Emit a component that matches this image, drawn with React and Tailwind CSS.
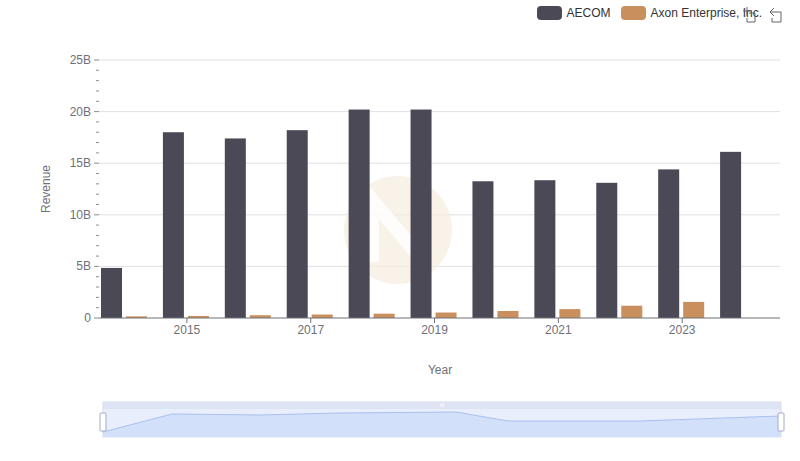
const aecom = [4.85, 18.0, 17.4, 18.2, 20.2, 20.2, 13.25, 13.35, 13.1, 14.4, 16.1];
const axon = [0.16, 0.2, 0.27, 0.34, 0.42, 0.53, 0.68, 0.86, 1.19, 1.56, null];

const X0 = 99;
const X1 = 780;
const Y0 = 318;
const PX = (318 - 60) / 25;
const CW = (X1 - X0) / 11;

function Chart() {
  const ticks = [0, 5, 10, 15, 20, 25];
  return (
    <svg width="800" height="461" className="absolute inset-0" style={{ fontFamily: "Liberation Sans, Arial, sans-serif" }}>
      {ticks.slice(1).map((t) => (
        <line key={t} x1={X0} x2={X1} y1={Y0 - t * PX} y2={Y0 - t * PX} stroke="#e0e0e6" />
      ))}
      {Array.from({ length: 26 }).map((_, i) => (
        <line key={i} x1={i % 5 === 0 ? 94 : 96} x2={99} y1={Y0 - i * PX} y2={Y0 - i * PX} stroke="#6e7079" strokeWidth="0.8" />
      ))}
      {ticks.map((t) => (
        <text key={t} x={91} y={Y0 - t * PX + 4} textAnchor="end" fontSize="12" fill="#6e7079">
          {t === 0 ? "0" : t + "B"}
        </text>
      ))}
      <circle cx="398" cy="230" r="54" fill="#f6ece0" opacity="0.7" />
      <path d="M372 262 L372 200 L424 262 L424 200" stroke="#fff" strokeWidth="14" fill="none" opacity="0.8" />
      {aecom.map((v, i) => {
        const x = X0 + i * CW + 2;
        return <rect key={"a" + i} x={x} y={Y0 - v * PX} width="21" height={v * PX} fill="#4a4955" />;
      })}
      {axon.map((v, i) =>
        v == null ? null : (
          <rect key={"b" + i} x={X0 + i * CW + 27} y={Y0 - v * PX} width="21" height={v * PX} fill="#c98f5c" />
        )
      )}
      <line x1={X0} x2={X1} y1={Y0} y2={Y0} stroke="#6e7079" />
      {[1, 3, 5, 7, 9].map((i) => (
        <g key={i}>
          <line x1={X0 + i * CW + 26} x2={X0 + i * CW + 26} y1={Y0} y2={Y0 + 5} stroke="#6e7079" />
          <text x={X0 + i * CW + 26} y={Y0 + 16} textAnchor="middle" fontSize="12" fill="#6e7079">
            {2014 + i}
          </text>
        </g>
      ))}
      <text x="440" y="374" textAnchor="middle" fontSize="12" fill="#6e7079">Year</text>
      <text x="50" y="189" textAnchor="middle" fontSize="12" fill="#6e7079" transform="rotate(-90 50 189)">Revenue</text>

      <rect x="103" y="402" width="678" height="35" fill="#e8eefc" stroke="#d2dbee" />
      <rect x="103" y="402" width="678" height="7" fill="#dde3f3" />
      <path d="M103 432 L172 414 L260 415 L340 413 L456 412 L508 421 L640 421 L781 416 L781 437 L103 437 Z" fill="#d2e0fa" />
      <path d="M103 432 L172 414 L260 415 L340 413 L456 412 L508 421 L640 421 L781 416" stroke="#a9c0f0" fill="none" />
      <rect x="100" y="413" width="6" height="18" rx="1" fill="#fff" stroke="#a2acc6" />
      <rect x="778" y="413" width="6" height="18" rx="1" fill="#fff" stroke="#a2acc6" />
      <text x="442" y="407" textAnchor="middle" fontSize="6" fill="#fff">III</text>
    </svg>
  );
}

export default function App() {
  return (
    <div className="relative w-[800px] h-[461px] bg-white overflow-hidden" style={{ fontFamily: "Liberation Sans, Arial, sans-serif" }}>
      <Chart />
      <div className="absolute top-[4px] right-[38px] flex items-center gap-[10px] text-[12px] text-[#333]">
        <div className="flex items-center gap-[5px]">
          <span className="w-[25px] h-[14px] rounded-[4px] bg-[#4a4955]" />
          <span>AECOM</span>
        </div>
        <div className="flex items-center gap-[5px]">
          <span className="w-[25px] h-[14px] rounded-[4px] bg-[#c98f5c]" />
          <span>Axon Enterprise, Inc.</span>
        </div>
      </div>
      <svg className="absolute top-[6px] right-[10px]" width="50" height="18" viewBox="0 0 50 18" fill="none" stroke="#666" strokeWidth="1">
        <path d="M3 5 H12 M7 1 V10 M9 7 H15 V16 H7 V12" />
        <path d="M30 6 L34 2 M30 6 L34 10 M30 6 H41 V16 H32 V12" />
      </svg>
    </div>
  );
}
